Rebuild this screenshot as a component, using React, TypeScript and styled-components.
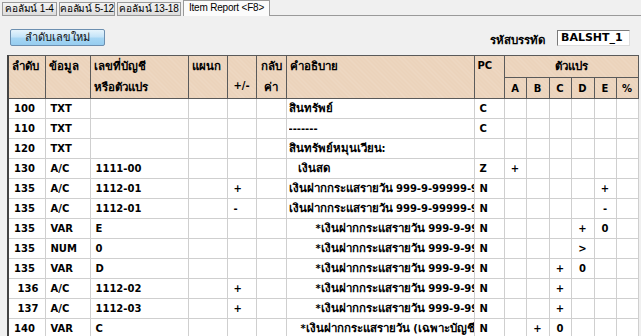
import React from 'react';
import styled, { createGlobalStyle } from 'styled-components';

const GlobalStyle = createGlobalStyle`
  html, body {
    margin: 0;
    padding: 0;
    background: #f0f0f0;
    overflow: hidden;
  }
  body {
    font-family: Tahoma, "DejaVu Sans", sans-serif;
    font-size: 11px;
    color: #000;
  }
`;

interface Row {
  seq: string;
  kind: string;
  account: string;
  sign: string;
  desc: string;
  indent: number;
  pc: string;
  vars: string[];
}

const longDesc = 'เงินฝากกระแสรายวัน 999-9-99999-9';
const none = ['', '', '', '', '', ''];

const rows: Row[] = [
  { seq: '100', kind: 'TXT', account: '', sign: '', desc: 'สินทรัพย์', indent: 0, pc: 'C', vars: none },
  { seq: '110', kind: 'TXT', account: '', sign: '', desc: '-------', indent: 0, pc: 'C', vars: none },
  { seq: '120', kind: 'TXT', account: '', sign: '', desc: 'สินทรัพย์หมุนเวียน:', indent: 0, pc: '', vars: none },
  { seq: '130', kind: 'A/C', account: '1111-00', sign: '', desc: 'เงินสด', indent: 9, pc: 'Z', vars: ['+', '', '', '', '', ''] },
  { seq: '135', kind: 'A/C', account: '1112-01', sign: '+', desc: longDesc, indent: 0, pc: 'N', vars: ['', '', '', '', '+', ''] },
  { seq: '135', kind: 'A/C', account: '1112-01', sign: '-', desc: longDesc, indent: 0, pc: 'N', vars: ['', '', '', '', '-', ''] },
  { seq: '135', kind: 'VAR', account: 'E', sign: '', desc: '*' + longDesc, indent: 27, pc: 'N', vars: ['', '', '', '+', '0', ''] },
  { seq: '135', kind: 'NUM', account: '0', sign: '', desc: '*' + longDesc, indent: 27, pc: 'N', vars: ['', '', '', '>', '', ''] },
  { seq: '135', kind: 'VAR', account: 'D', sign: '', desc: '*' + longDesc, indent: 27, pc: 'N', vars: ['', '', '+', '0', '', ''] },
  { seq: '\u00a0136', kind: 'A/C', account: '1112-02', sign: '+', desc: '*' + longDesc, indent: 27, pc: 'N', vars: ['', '', '+', '', '', ''] },
  { seq: '\u00a0137', kind: 'A/C', account: '1112-03', sign: '+', desc: '*' + longDesc, indent: 27, pc: 'N', vars: ['', '', '+', '', '', ''] },
  { seq: '140', kind: 'VAR', account: 'C', sign: '', desc: '*เงินฝากกระแสรายวัน (เฉพาะบัญชี)', indent: 12, pc: 'N', vars: ['', '+', '0', '', '', ''] },
];

const widths = [37, 45, 98, 39, 29, 30, 188, 30, 22, 23, 22, 23, 22, 22];

const tabs = [
  { label: 'คอลัมน์ 1-4', width: 55 },
  { label: 'คอลัมน์ 5-12', width: 56 },
  { label: 'คอลัมน์ 13-18', width: 64 },
];

// Thai runs are set a little larger than the latin digits, as the old Tahoma grid did
function Mixed({ text }: { text: string }) {
  const parts = text.split(/([\u0E00-\u0E7F]+)/);
  return (
    <>
      {parts.map((p, i) => (i % 2 === 1 ? <Thai key={i}>{p}</Thai> : p))}
    </>
  );
}

export default function App() {
  return (
    <Screen>
      <GlobalStyle />
      <TabBar>
        {tabs.map(t => (
          <Tab key={t.label} width={t.width}>{t.label}</Tab>
        ))}
        <Tab active width={87}>Item Report &lt;F8&gt;</Tab>
        <TabFill />
      </TabBar>
      <Toolbar>
        <BlueButton>ลำดับเลขใหม่</BlueButton>
        <CodeField>
          <FieldLabel>รหัสบรรทัด</FieldLabel>
          <FieldBox>BALSHT_1</FieldBox>
        </CodeField>
      </Toolbar>
      <Grid>
        <colgroup>
          {widths.map((w, i) => (
            <col key={i} style={{ width: w }} />
          ))}
        </colgroup>
        <thead>
          <tr>
            <Head rowSpan={2}><Thai>ลำดับ</Thai></Head>
            <Head rowSpan={2}><Thai>ข้อมูล</Thai></Head>
            <Head rowSpan={2}><Thai>เลขที่บัญชี</Thai><br /><Thai>หรือตัวแปร</Thai></Head>
            <Head rowSpan={2}><Thai>แผนก</Thai></Head>
            <Head rowSpan={2} center>&nbsp;<br />+/-</Head>
            <Head rowSpan={2} center><Thai>กลับ</Thai><br /><Thai>ค่า</Thai></Head>
            <Head rowSpan={2}><Thai>คำอธิบาย</Thai></Head>
            <Head rowSpan={2}>PC</Head>
            <Head colSpan={6} center><Thai>ตัวแปร</Thai></Head>
          </tr>
          <tr>
            {['A', 'B', 'C', 'D', 'E', '%'].map(v => (
              <SubHead key={v}>{v}</SubHead>
            ))}
          </tr>
        </thead>
        <tbody>
          {rows.map((r, i) => (
            <tr key={i}>
              <Cell>{r.seq}</Cell>
              <Cell>{r.kind}</Cell>
              <Cell>{r.account}</Cell>
              <Cell />
              <Cell pad={6}>{r.sign}</Cell>
              <Cell />
              <Cell pad={2}>
                <DescText style={{ paddingLeft: r.indent }}>
                  <Mixed text={r.desc} />
                </DescText>
              </Cell>
              <Cell>{r.pc}</Cell>
              {r.vars.map((v, j) => (
                <VarCell key={j}>{v}</VarCell>
              ))}
            </tr>
          ))}
        </tbody>
      </Grid>
    </Screen>
  );
}

const Screen = styled.div`
  width: 641px;
  height: 336px;
  overflow: hidden;
  background: #f0f0f0;
`;

const TabBar = styled.div`
  display: flex;
  align-items: flex-end;
  height: 16px;
  padding-left: 2px;
`;

const Tab = styled.div<{ active?: boolean; width: number }>`
  width: ${p => p.width}px;
  height: ${p => (p.active ? 16 : 14)}px;
  box-sizing: border-box;
  margin-right: ${p => (p.active ? 0 : 2)}px;
  border: 1px solid #9a9a9a;
  border-bottom: ${p => (p.active ? 'none' : '1px solid #9a9a9a')};
  background: ${p => (p.active ? '#fbfbfb' : 'linear-gradient(#f4f4f4, #dcdcdc)')};
  font-family: "Liberation Sans", "DejaVu Sans", sans-serif;
  font-size: 10px;
  letter-spacing: -0.2px;
  line-height: ${p => (p.active ? 13 : 12)}px;
  text-align: center;
  white-space: nowrap;
  color: #000;
`;

const TabFill = styled.div`
  flex: 1;
  height: 1px;
  background: #9a9a9a;
`;

const Toolbar = styled.div`
  display: flex;
  align-items: center;
  justify-content: space-between;
  padding: 13px 11px 0 10px;
  height: 17px;
`;

const BlueButton = styled.div`
  width: 95px;
  height: 17px;
  box-sizing: border-box;
  border: 1px solid #6c8fb0;
  border-radius: 2px;
  background: linear-gradient(#e6f4fc 0%, #c5e4f8 45%, #a6d6f4 55%, #96cdf0 100%);
  font-size: 11px;
  line-height: 15px;
  text-align: center;
  color: #111;
`;

const CodeField = styled.div`
  display: flex;
  align-items: center;
  gap: 12px;
`;

const FieldLabel = styled.span`
  font-size: 11.5px;
  font-weight: bold;
  padding-top: 4px;
`;

const FieldBox = styled.div`
  width: 73px;
  height: 16px;
  box-sizing: border-box;
  border: 1px solid #7a7a7a;
  border-right-color: #ddd;
  border-bottom-color: #ddd;
  background: #fff;
  padding-left: 3px;
  font-size: 11px;
  font-weight: bold;
  line-height: 14px;
`;

const Grid = styled.table`
  margin: 9px 0 0 7px;
  border-collapse: collapse;
  table-layout: fixed;
  width: 630px;
  border-left: 2px solid #444;
  font-size: 10px;
  font-weight: bold;
`;

const Thai = styled.span`
  font-size: 11.5px;
`;

const headBg = `
  background-color: #ebd3bb;
  background-image: repeating-linear-gradient(45deg, rgba(255, 255, 255, 0.12) 0 1px, transparent 1px 3px);
`;

const Head = styled.th<{ center?: boolean }>`
  ${headBg}
  border: 1px solid #5a5a5a;
  text-align: ${p => (p.center ? 'center' : 'left')};
  vertical-align: top;
  padding: 0 3px;
  line-height: 20px;
  font-weight: bold;
  white-space: nowrap;
  overflow: hidden;
`;

const SubHead = styled.th`
  ${headBg}
  border: 1px solid #5a5a5a;
  height: 20px;
  padding: 0;
  text-align: center;
  font-weight: bold;
`;

const Cell = styled.td<{ pad?: number }>`
  height: 19px;
  border: 1px solid #cfcfcf;
  background: #fff;
  padding: 0 0 0 ${p => p.pad ?? 5}px;
  line-height: 19px;
  white-space: nowrap;
  overflow: hidden;
`;

const DescText = styled.div`
  overflow: hidden;
  white-space: nowrap;
  width: 100%;
  height: 19px;
  box-sizing: border-box;
`;

const VarCell = styled(Cell)`
  padding: 0;
  text-align: center;
`;
